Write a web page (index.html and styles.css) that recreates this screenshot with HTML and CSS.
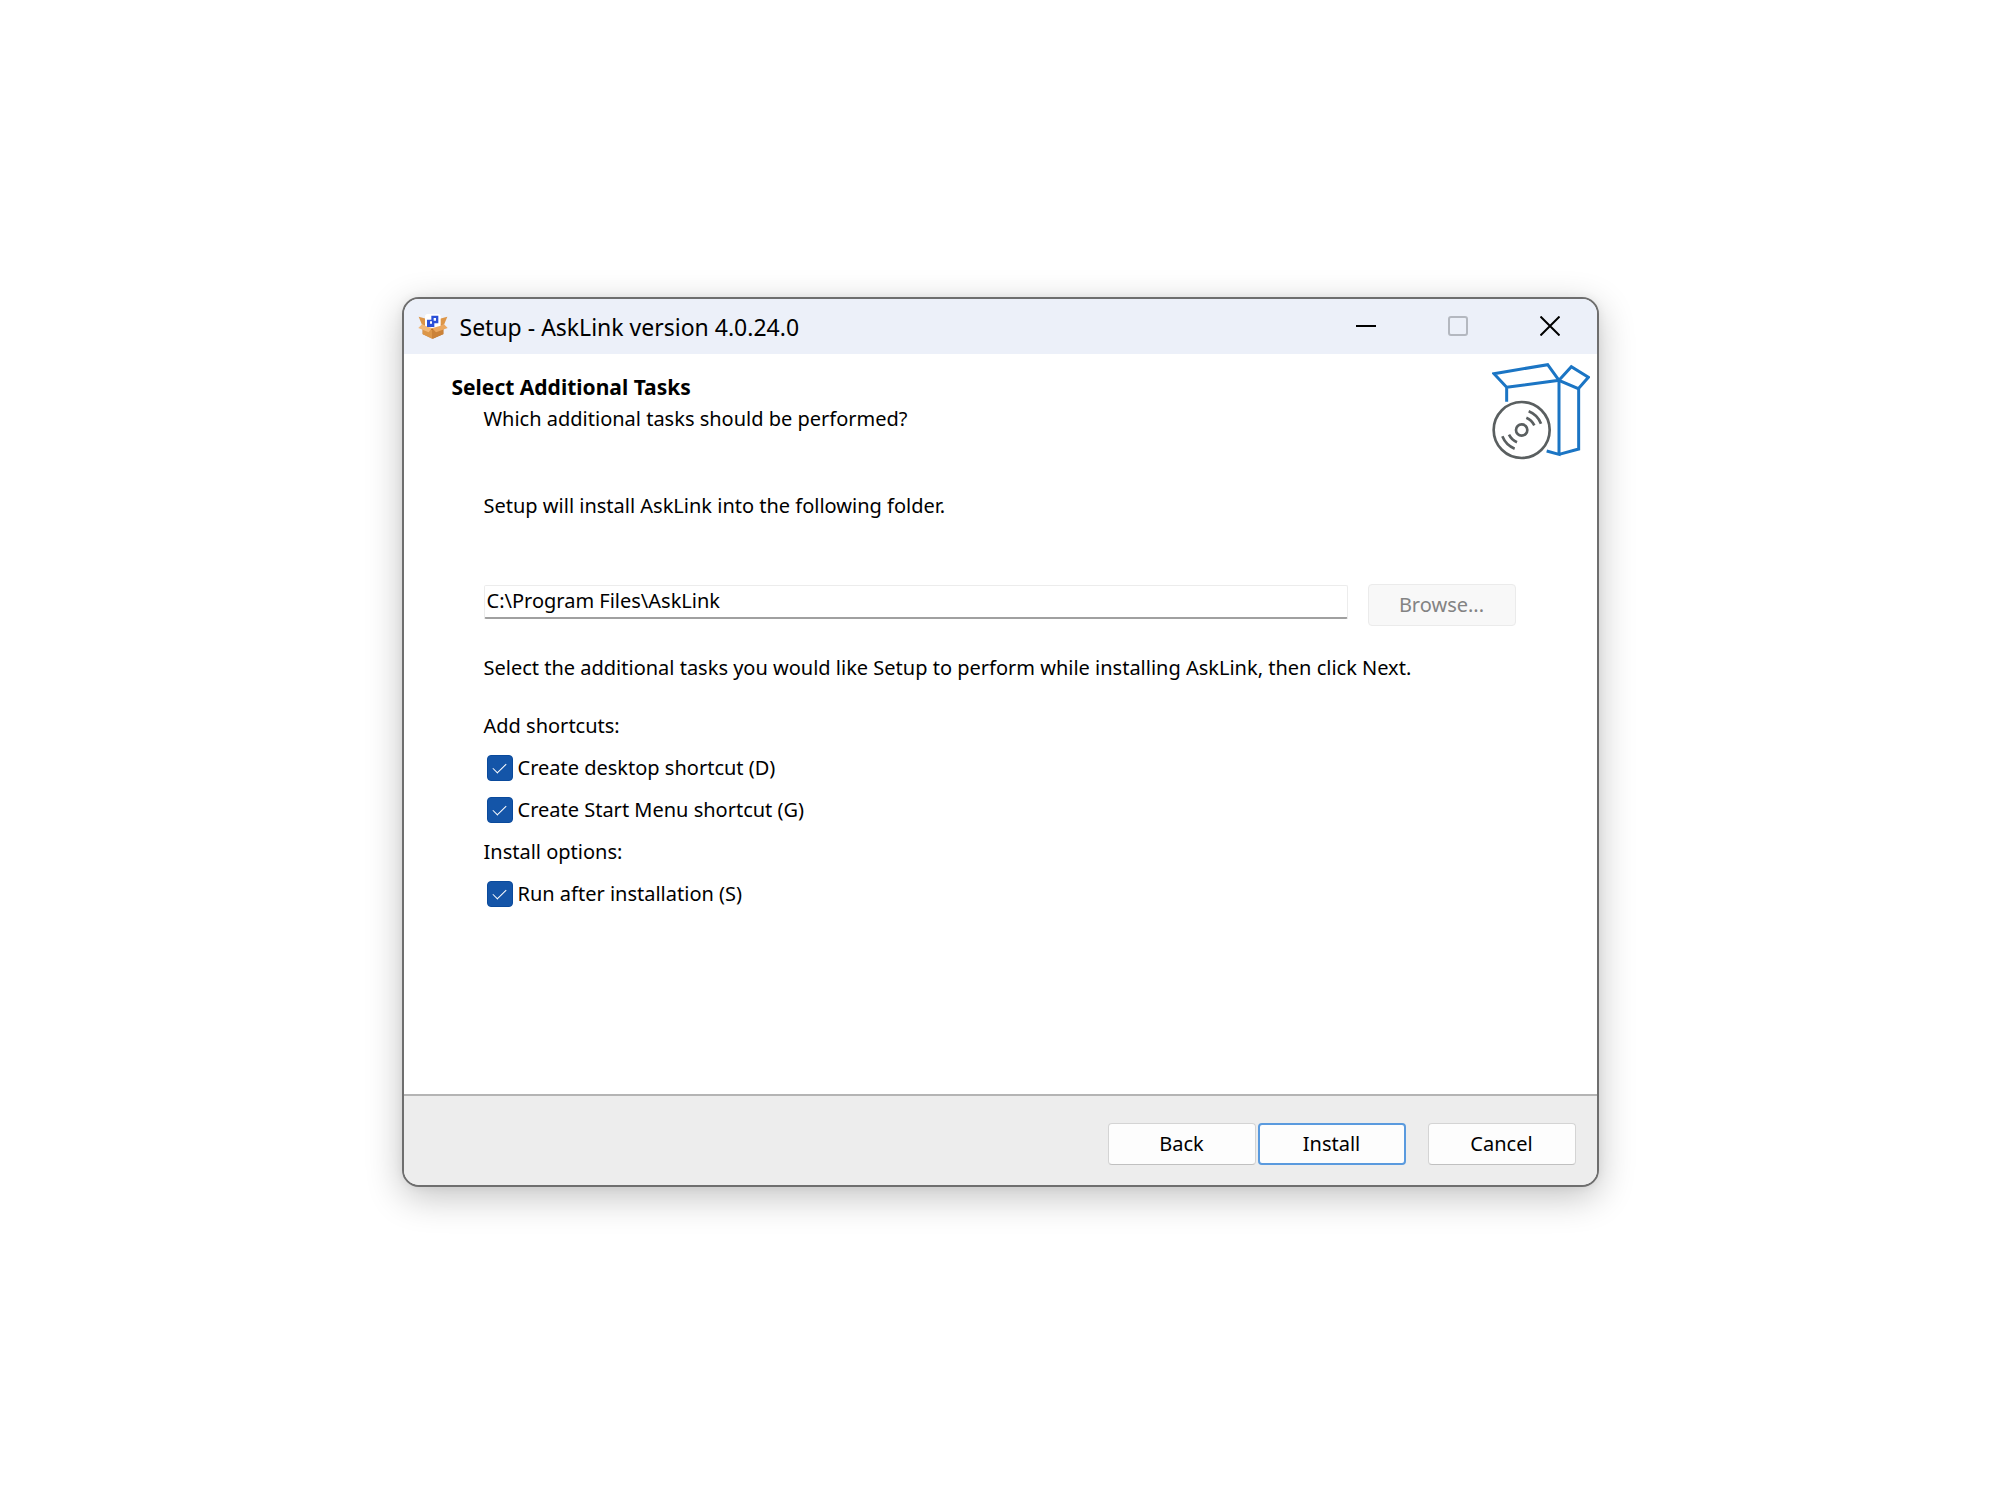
FILE: index.html
```html
<!DOCTYPE html>
<html lang="en">
<head>
<meta charset="utf-8">
<meta name="viewport" content="width=device-width, initial-scale=1">
<title>Setup - AskLink version 4.0.24.0</title>
<link rel="stylesheet" href="styles.css">
</head>
<body>
<main class="window">
  <header class="titlebar">
    <svg class="app-icon" viewBox="0 0 90 75" aria-hidden="true">
      <path d="M2 8 30 16V34L12 32Z" fill="#dd9547"/>
      <path d="M88 8 60 16V34L78 32Z" fill="#dd9547"/>
      <path d="M14 32H76V60L45 74 14 60Z" fill="#b96f26"/>
      <path d="M14 40 42 48V74L14 61Z" fill="#dc9648"/>
      <path d="M76 40 42 48V74L76 61Z" fill="#cb8238"/>
      <path d="M12 31 42 42 32 55 1 42Z" fill="#f2b878"/>
      <path d="M78 31 42 42 54 55 89 42Z" fill="#eba75f"/>
      <path d="M29 0H60Q68 0 68 8V35L42 43 21 35V8Q21 0 29 0Z" fill="#fff"/>
      <path d="M40 5H61V28H49V39H27V17H40Z" fill="#2b50d8"/>
      <path d="M36 22H42V29H36ZM47 12H54V20H47Z" fill="#fff"/>
    </svg>
    <h1 class="title">Setup - AskLink version 4.0.24.0</h1>
    <div class="captions">
      <button class="caption" type="button" aria-label="Minimize"><svg viewBox="0 0 20 20"><path d="M0 10H20" stroke-width="2"/></svg></button>
      <button class="caption" type="button" aria-label="Maximize" disabled><svg viewBox="0 0 20 20"><rect x="1" y="1" width="18" height="18" rx="2" stroke-width="2"/></svg></button>
      <button class="caption" type="button" aria-label="Close"><svg viewBox="0 0 20 20"><path d="M.5 .5 19.500 19.500M19.500 .5 .5 19.500" stroke-width="2"/></svg></button>
    </div>
  </header>
  <form class="wizard">
    <div class="page-head">
      <div class="page-text">
        <h2 class="page-title">Select Additional Tasks</h2>
        <p class="page-sub">Which additional tasks should be performed?</p>
      </div>
      <svg class="package" viewBox="36 24 294 291" fill="none" aria-hidden="true">
        <g stroke="#1b75c4" stroke-width="9">
          <path d="M80 140V97L42 56 203 29 237 76 80 97"/>
          <path d="M237 76 274 35 325 67 295 101Z"/>
          <path d="M237 76V298L200 288M237 298 296 282V101"/>
        </g>
        <g stroke="#5a5f60" stroke-width="8">
          <circle cx="125" cy="225" r="84"/>
          <circle cx="125" cy="225" r="17"/>
          <path d="M139 188Q155 195 163 211M146 169Q172 179 183 206M111 262Q95 255 87 239M104 281Q78 271 67 244"/>
        </g>
      </svg>
    </div>
    <div class="content">
      <p class="line"><label for="folder">Setup will install AskLink into the following folder.</label></p>
      <div class="folder-row">
        <input class="folder" id="folder" type="text" value="C:\Program Files\AskLink" readonly>
        <button class="button" type="button" disabled>Browse...</button>
      </div>
      <p class="line">Select the additional tasks you would like Setup to perform while installing AskLink, then click Next.</p>
      <fieldset class="group">
        <legend class="row">Add shortcuts:</legend>
        <label class="row"><input class="tick" type="checkbox" checked>Create desktop shortcut (D)</label>
        <label class="row"><input class="tick" type="checkbox" checked>Create Start Menu shortcut (G)</label>
      </fieldset>
      <fieldset class="group">
        <legend class="row">Install options:</legend>
        <label class="row"><input class="tick" type="checkbox" checked>Run after installation (S)</label>
      </fieldset>
    </div>
    <footer class="actions">
      <button class="button" type="button">Back</button>
      <button class="button primary" type="submit">Install</button>
      <button class="button cancel" type="button">Cancel</button>
    </footer>
  </form>
</main>
</body>
</html>
```

FILE: styles.css
```css
* { box-sizing: border-box; }

body {
  margin: 0;
  min-height: 100vh;
  display: flex;
  align-items: center;
  justify-content: center;
  padding: 24px 24px 40px;
  background: #fff;
  color: #000;
  font: 20px/32px "Noto Sans", sans-serif;
}

h1, h2, p { margin: 0; }
button, input { font: inherit; color: inherit; }

.window {
  display: flex;
  flex-direction: column;
  width: 100%;
  max-width: 1197px;
  min-height: 890px;
  border: 2px solid #6e6e6e;
  border-radius: 17px;
  overflow: hidden;
  background: #fff;
  box-shadow: 0 10px 36px rgba(0, 0, 0, .24), 0 0 10px rgba(0, 0, 0, .06);
}

.titlebar {
  display: flex;
  align-items: center;
  height: 55px;
  padding-left: 14px;
  background: #ecf0f9;
}
.app-icon { width: 30px; height: 25px; margin-right: 12px; }
.title { flex: 1; font-size: 23px; font-weight: 400; }
.captions { display: flex; align-self: flex-start; padding-right: 1px; }
.caption {
  display: flex;
  align-items: center;
  justify-content: center;
  width: 92px;
  height: 53px;
  padding: 0;
  border: 0;
  background: none;
}
.caption svg { width: 20px; height: 20px; fill: none; stroke: #000; }
.caption:disabled svg { stroke: #b4b8c0; }

.wizard { flex: 1; display: flex; flex-direction: column; }

.page-head {
  display: flex;
  justify-content: space-between;
  padding: 9px 7px 0 48px;
}
.page-text { padding-top: 8px; }
.page-title { font-size: 21px; font-weight: 700; line-height: 32px; }
.page-sub { padding-left: 32px; }
.package { width: 98px; height: 97px; }

.content { flex: 1; padding: 30px 81px 40px 80px; }
.folder-row {
  display: flex;
  align-items: flex-start;
  gap: 20px;
  margin: 62px 0 26px;
}
.folder {
  flex: 1;
  min-width: 0;
  height: 34px;
  margin-top: 1px;
  padding: 0 2px 2px;
  border: 1px solid #ececec;
  border-bottom: 2px solid #a0a0a0;
  border-radius: 2px;
  background: #fff;
  outline: 0;
}

.group { margin: 0; padding: 0; border: 0; }
.line + .group { margin-top: 21px; }
.row { display: flex; align-items: center; height: 42px; padding: 0; }

.tick {
  appearance: none;
  width: 26px;
  height: 26px;
  margin: 0 5px 0 3px;
  display: grid;
  place-items: center;
  border: 1px solid #0a4a9c;
  border-radius: 4px;
  background: #1455a8;
}
.tick:checked::before {
  content: "";
  width: 12px;
  height: 6px;
  margin-bottom: 3px;
  border: solid #fff;
  border-width: 0 0 1px 1px;
  transform: rotate(-45deg);
}

.actions {
  display: flex;
  justify-content: flex-end;
  gap: 2px;
  padding: 27px 21px 20px;
  border-top: 2px solid #b4b4b4;
  background: #ededed;
}
.button {
  width: 148px;
  height: 42px;
  padding: 0;
  border: 1px solid #d4d4d4;
  border-bottom-color: #c0c0c0;
  border-radius: 4px;
  background: #fdfdfd;
}
.button:disabled { border-color: #ebebeb; background: #f8f8f8; color: #838383; }
.primary { border: 2px solid #5a9ade; }
.cancel { margin-left: 20px; }
```
